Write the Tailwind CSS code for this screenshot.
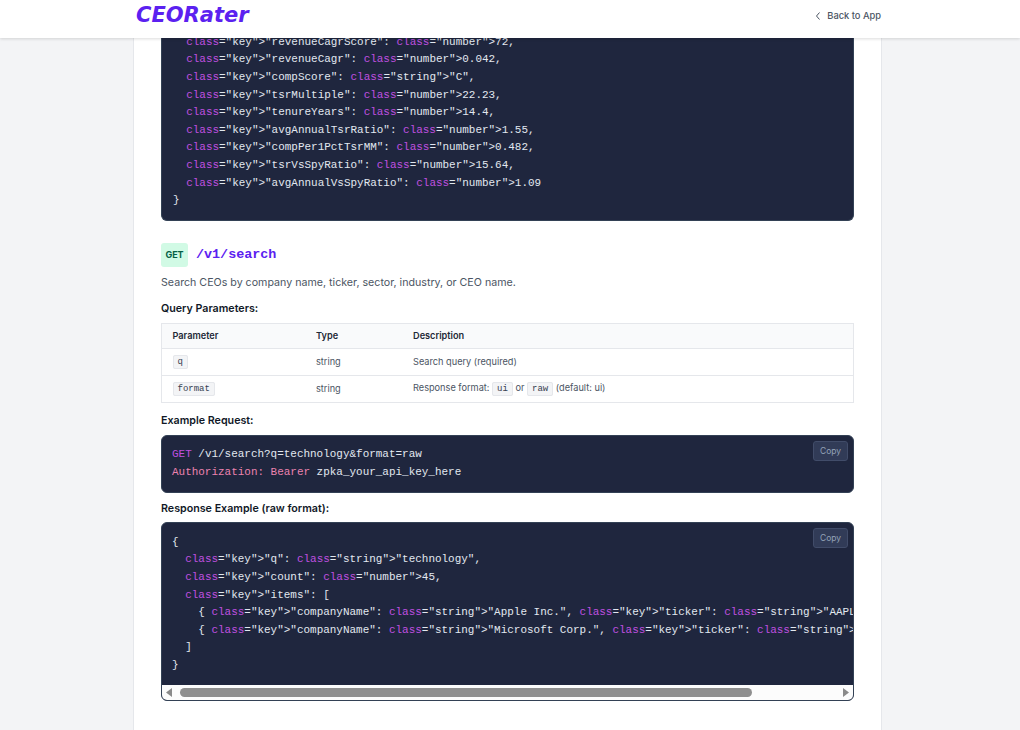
<!DOCTYPE html>
<html>
<head>
<meta charset="utf-8">
<script src="https://cdn.jsdelivr.net/npm/@tailwindcss/browser@4"></script>
</head>
<body class="h-[730px] overflow-hidden bg-[#f3f4f6] font-['Inter',sans-serif]">
<header class="relative z-10 h-[38px] bg-white pb-[7px] shadow-[0_1px_3px_rgba(0,0,0,0.14)]">
  <div class="ml-[134px] flex h-full w-[747px] items-center justify-between pl-[2px]">
    <span class="font-['DejaVu_Sans',sans-serif] text-[21px] leading-none font-bold text-[#5b21f0] italic">CEORater</span>
    <a class="flex items-center gap-[6px] text-[9.3px] font-medium text-[#4b5563]">
      <svg class="h-[8px] w-[6px]" viewBox="0 0 6 8" fill="none" stroke="#4b5563" stroke-width="1"><path d="M4.500 .5 1.500 4l3 3.500"/></svg>
      Back to App
    </a>
  </div>
</header>
<main class="ml-[133px] h-[692px] w-[749px] overflow-hidden border-x border-[#e5e7eb] bg-white px-[27px]">
  <pre class="-mt-[4.2px] h-[187.2px] overflow-hidden rounded-b-md border-x border-b border-[#334155] bg-[#1f263e] pl-[11px] font-['Liberation_Mono',monospace] text-[10.96px] leading-[17.6px] text-[#e2e8f0]">  <span class="text-[#c050e0]">class</span>="key"&gt;"revenueCagrScore": <span class="text-[#c050e0]">class</span>="number"&gt;72,
  <span class="text-[#c050e0]">class</span>="key"&gt;"revenueCagr": <span class="text-[#c050e0]">class</span>="number"&gt;0.042,
  <span class="text-[#c050e0]">class</span>="key"&gt;"compScore": <span class="text-[#c050e0]">class</span>="string"&gt;"C",
  <span class="text-[#c050e0]">class</span>="key"&gt;"tsrMultiple": <span class="text-[#c050e0]">class</span>="number"&gt;22.23,
  <span class="text-[#c050e0]">class</span>="key"&gt;"tenureYears": <span class="text-[#c050e0]">class</span>="number"&gt;14.4,
  <span class="text-[#c050e0]">class</span>="key"&gt;"avgAnnualTsrRatio": <span class="text-[#c050e0]">class</span>="number"&gt;1.55,
  <span class="text-[#c050e0]">class</span>="key"&gt;"compPer1PctTsrMM": <span class="text-[#c050e0]">class</span>="number"&gt;0.482,
  <span class="text-[#c050e0]">class</span>="key"&gt;"tsrVsSpyRatio": <span class="text-[#c050e0]">class</span>="number"&gt;15.64,
  <span class="text-[#c050e0]">class</span>="key"&gt;"avgAnnualVsSpyRatio": <span class="text-[#c050e0]">class</span>="number"&gt;1.09
}</pre>

  <div class="mt-[22px] flex items-center gap-[8px]">
    <span class="flex h-[24px] w-[27px] items-center justify-center rounded-[3px] bg-[#d1fae5] text-[9px] font-bold text-[#065f46]">GET</span>
    <code class="font-['Liberation_Mono',monospace] text-[13.4px] font-bold text-[#5b21f0]">/v1/search</code>
  </div>
  <p class="mt-[7px] text-[10.66px] leading-[17px] text-[#4b5563]">Search CEOs by company name, ticker, sector, industry, or CEO name.</p>

  <h4 class="mt-[9px] text-[10.7px] leading-[17px] font-semibold text-[#111827]">Query Parameters:</h4>
  <table class="mt-[6px] w-full border border-[#e5e7eb] text-[9.2px] text-[#4b5563]">
    <thead class="bg-[#f9fafb]">
      <tr class="h-[25px] border-b border-[#e5e7eb]">
        <th class="w-[154.5px] pl-[10.5px] text-left font-semibold text-[#1f2937]">Parameter</th>
        <th class="w-[97px] text-left font-semibold text-[#1f2937]">Type</th>
        <th class="text-left font-semibold text-[#1f2937]">Description</th>
      </tr>
    </thead>
    <tbody>
      <tr class="h-[27px] border-b border-[#e5e7eb]">
        <td class="pl-[10.5px]"><code class="rounded-[2px] border border-[#e5e7eb] bg-[#f3f4f6] px-[4px] py-[1px] font-['Liberation_Mono',monospace] text-[9px] text-[#374151]">q</code></td>
        <td>string</td>
        <td>Search query (required)</td>
      </tr>
      <tr class="h-[27px]">
        <td class="pl-[10.5px]"><code class="rounded-[2px] border border-[#e5e7eb] bg-[#f3f4f6] px-[4px] py-[1px] font-['Liberation_Mono',monospace] text-[9px] text-[#374151]">format</code></td>
        <td>string</td>
        <td>Response format: <code class="rounded-[2px] border border-[#e5e7eb] bg-[#f3f4f6] px-[4px] py-[1px] font-['Liberation_Mono',monospace] text-[9px] text-[#374151]">ui</code> or <code class="rounded-[2px] border border-[#e5e7eb] bg-[#f3f4f6] px-[4px] py-[1px] font-['Liberation_Mono',monospace] text-[9px] text-[#374151]">raw</code> (default: ui)</td>
      </tr>
    </tbody>
  </table>

  <h4 class="mt-[9px] text-[10.7px] leading-[17px] font-semibold text-[#111827]">Example Request:</h4>
  <div class="relative mt-[6px] h-[58px] overflow-hidden rounded-md border border-[#334155] bg-[#1f263e]">
    <pre class="pt-[10px] pl-[10px] font-['Liberation_Mono',monospace] text-[10.96px] leading-[17.6px] text-[#e2e8f0]"><span class="text-[#c050e0]">GET</span> /v1/search?q=technology&amp;format=raw
<span class="text-[#ec82af]">Authorization: Bearer</span> zpka_your_api_key_here</pre>
    <button class="absolute top-[5px] right-[5px] h-[20px] w-[35px] rounded-[3px] border border-[#414c69] bg-[#313b57] text-[8.5px] text-[#94a3b8]">Copy</button>
  </div>

  <h4 class="mt-[7px] text-[10.7px] leading-[17px] font-semibold text-[#111827]">Response Example (raw format):</h4>
  <div class="relative mt-[5px] h-[179px] overflow-hidden rounded-md border border-[#334155] bg-[#1f263e]">
    <pre class="pt-[10.9px] pl-[10px] font-['Liberation_Mono',monospace] text-[10.96px] leading-[17.6px] text-[#e2e8f0]">{
  <span class="text-[#c050e0]">class</span>="key"&gt;"q": <span class="text-[#c050e0]">class</span>="string"&gt;"technology",
  <span class="text-[#c050e0]">class</span>="key"&gt;"count": <span class="text-[#c050e0]">class</span>="number"&gt;45,
  <span class="text-[#c050e0]">class</span>="key"&gt;"items": [
    { <span class="text-[#c050e0]">class</span>="key"&gt;"companyName": <span class="text-[#c050e0]">class</span>="string"&gt;"Apple Inc.", <span class="text-[#c050e0]">class</span>="key"&gt;"ticker": <span class="text-[#c050e0]">class</span>="string"&gt;"AAPL"
    { <span class="text-[#c050e0]">class</span>="key"&gt;"companyName": <span class="text-[#c050e0]">class</span>="string"&gt;"Microsoft Corp.", <span class="text-[#c050e0]">class</span>="key"&gt;"ticker": <span class="text-[#c050e0]">class</span>="string"&gt;"MSFT"
  ]
}</pre>
    <button class="absolute top-[5px] right-[5px] h-[20px] w-[35px] rounded-[3px] border border-[#414c69] bg-[#313b57] text-[8.5px] text-[#94a3b8]">Copy</button>
    <div class="absolute inset-x-0 bottom-0 flex h-[15px] items-center bg-[#fcfcfc] px-[4px]">
      <svg class="h-[9px] w-[6px] shrink-0" viewBox="0 0 6 9" fill="#8a8a8a"><path d="M6 0v9L0 4.500z"/></svg>
      <div class="ml-[8px] h-[9px] w-[572px] rounded-full bg-[#8f8f8f]"></div>
      <svg class="ml-auto h-[9px] w-[6px] shrink-0" viewBox="0 0 6 9" fill="#8a8a8a"><path d="M0 0v9l6-4.500z"/></svg>
    </div>
  </div>
</main>
</body>
</html>
